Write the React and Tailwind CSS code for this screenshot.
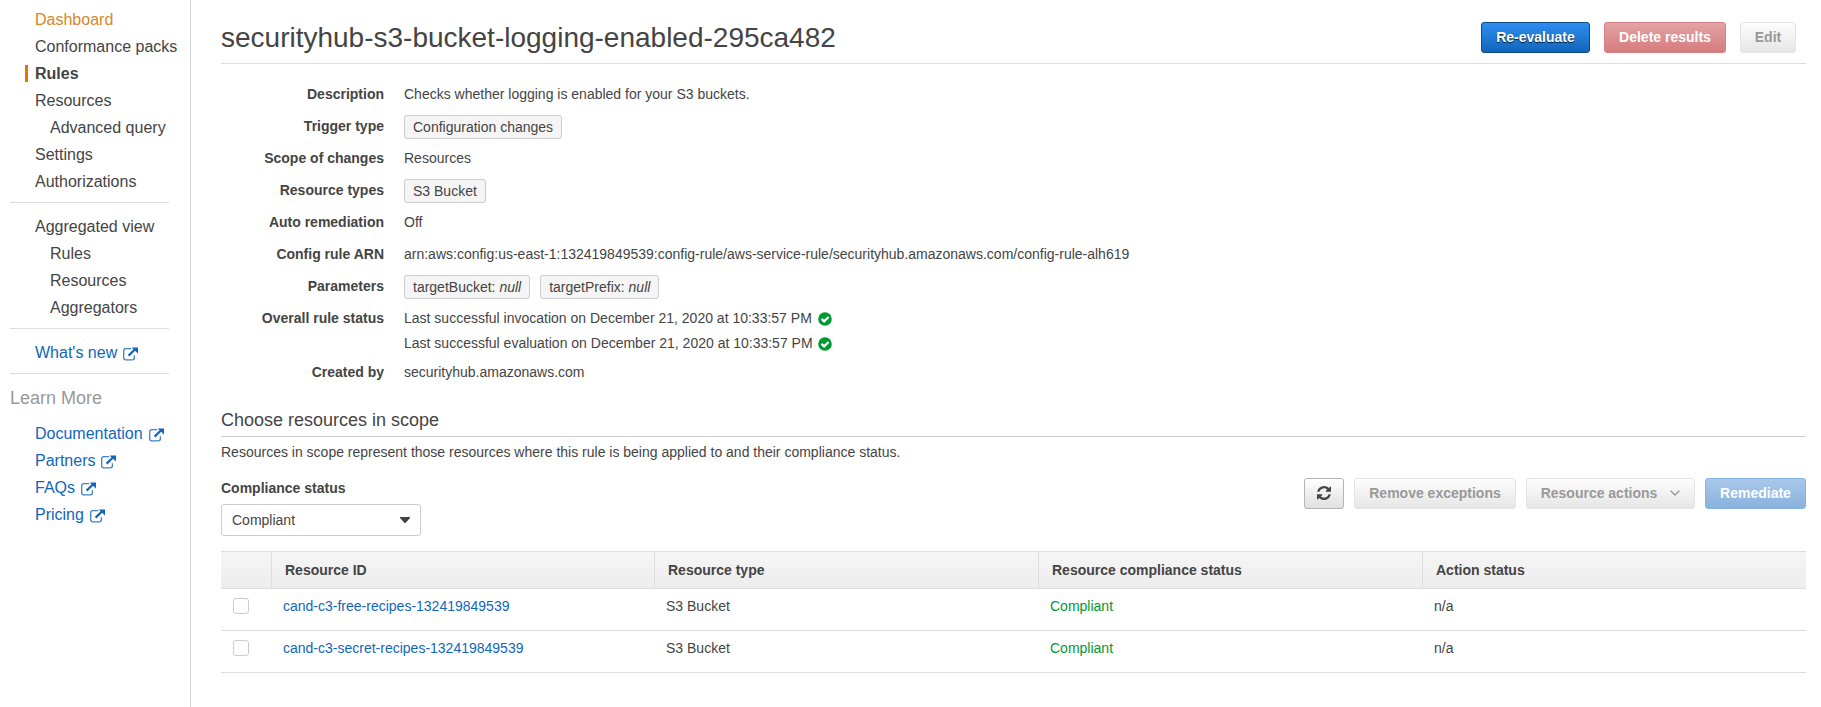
function ExternalIcon() {
  return (
    <svg className="ml-[6px] mt-[3px] shrink-0" width="16" height="14" viewBox="0 0 16 14" fill="none">
      <path d="M8 1.7H2.7A2 2 0 0 0 .7 3.7V10.8a2 2 0 0 0 2 2H9.4a2 2 0 0 0 2-2V8.2" stroke="#3f82c8" strokeWidth="1.3" />
      <path d="M5.6 8.6L12.4 2" stroke="#1166bb" strokeWidth="2.2" />
      <path d="M8.6 .4H15V6.6Z" fill="#1166bb" />
    </svg>
  );
}

function CheckIcon() {
  return (
    <svg className="mt-1 shrink-0" width="14" height="14" viewBox="0 0 14 14">
      <circle cx="7" cy="7" r="6.8" fill="#093" />
      <path d="M3.5 6.9L6.1 9.4L10.6 5" stroke="#fff" strokeWidth="2.2" fill="none" />
    </svg>
  );
}

function RefreshIcon() {
  return (
    <svg width="14" height="14" viewBox="0 0 1536 1536" fill="currentColor">
      <path d="M1511 928q0 5-1 7-64 268-268 434.5T764 1536q-146 0-282.5-55T238 1324l-129 129q-19 19-45 19t-45-19-19-45V960q0-26 19-45t45-19h448q26 0 45 19t19 45-19 45l-137 137q71 66 161 102t187 36q134 0 250-65t186-179q11-17 53-117 8-23 30-23h192q13 0 22.5 9.5t9.5 22.5zm25-800v448q0 26-19 45t-45 19h-448q-26 0-45-19t-19-45 19-45l138-138Q969 256 768 256q-134 0-250 65T332 500q-11 17-53 117-8 23-30 23H50q-13 0-22.5-9.5T18 608v-7q65-268 270-434.5T768 0q146 0 284 55.5T1297 212l130-129q19-19 45-19t45 19 19 45z" />
    </svg>
  );
}

function NavItem({ children, className = "pl-[25px]" }) {
  return <li className={`flex h-[27px] items-center whitespace-nowrap ${className}`}>{children}</li>;
}

function NavLink({ children }) {
  return (
    <NavItem className="pl-[25px] text-[#1166bb]">
      {children}
      <ExternalIcon />
    </NavItem>
  );
}

function Divider() {
  return <hr className="mb-[10px] mt-[7px] w-[159px] border-[#ddd]" />;
}

function Sidebar() {
  return (
    <nav className="h-full w-[191px] shrink-0 border-r border-[#d5d5d5] pl-[10px] pt-[6px] text-base">
      <ul>
        <NavItem className="pl-[25px] text-[#d6862b]">Dashboard</NavItem>
        <NavItem>Conformance packs</NavItem>
        <NavItem className="pl-[15px] font-bold">
          <span className="mr-[7px] h-[17px] w-[3px] bg-[#e07700]" />
          Rules
        </NavItem>
        <NavItem>Resources</NavItem>
        <NavItem className="pl-[40px]">Advanced query</NavItem>
        <NavItem>Settings</NavItem>
        <NavItem>Authorizations</NavItem>
      </ul>
      <Divider />
      <ul>
        <NavItem>Aggregated view</NavItem>
        <NavItem className="pl-[40px]">Rules</NavItem>
        <NavItem className="pl-[40px]">Resources</NavItem>
        <NavItem className="pl-[40px]">Aggregators</NavItem>
      </ul>
      <Divider />
      <ul>
        <NavLink>What's new</NavLink>
      </ul>
      <Divider />
      <h2 className="h-[27px] text-lg leading-[28px] text-[#999]">Learn More</h2>
      <ul className="pt-[9px]">
        <NavLink>Documentation</NavLink>
        <NavLink>Partners</NavLink>
        <NavLink>FAQs</NavLink>
        <NavLink>Pricing</NavLink>
      </ul>
    </nav>
  );
}

function Button({ children, className }) {
  return (
    <button className={`flex h-[31px] items-center justify-center whitespace-nowrap rounded-[3px] border bg-linear-to-b pb-px text-sm font-bold ${className}`}>
      {children}
    </button>
  );
}

const disabled = "border-[#e4e4e4] from-[#fdfdfd] to-[#e6e6e6] text-[#999]";

function Chip({ children }) {
  return (
    <span className="mr-[10px] flex h-6 items-center rounded-[3px] border border-[#ccc] bg-[#f5f5f5] px-2">{children}</span>
  );
}

function Detail({ label, children, className = "h-8" }) {
  return (
    <div className={`flex ${className}`}>
      <dt className="w-[163px] text-right font-bold leading-5">{label}</dt>
      <dd className="ml-5 leading-5">{children}</dd>
    </div>
  );
}

function Chips({ children }) {
  return <div className="-mt-px flex">{children}</div>;
}

function StatusLine({ children }) {
  return (
    <div className="flex h-[25px] items-start">
      <span className="w-[414px] whitespace-nowrap">{children}</span>
      <CheckIcon />
    </div>
  );
}

const rows = ["cand-c3-free-recipes-132419849539", "cand-c3-secret-recipes-132419849539"];
const columns = ["Resource ID", "Resource type", "Resource compliance status", "Action status"];

function Table() {
  return (
    <div className="mt-[15px] border-t border-[#ddd]">
      <div className="grid h-[37px] grid-cols-[50px_383px_384px_384px_384px] border-b border-[#ddd] bg-linear-to-b from-[#f5f5f5] to-[#ededed] font-bold">
        <div />
        {columns.map((c) => (
          <div key={c} className="flex items-center border-l border-[#ddd] pl-[13px]">{c}</div>
        ))}
      </div>
      {rows.map((id) => (
        <div key={id} className="grid h-[42px] grid-cols-[50px_383px_384px_384px_384px] border-b border-[#ddd] pt-[7px] leading-5">
          <div className="pl-3 pt-[2px]">
            <div className="size-4 rounded-[3px] border border-[#ccc] bg-white" />
          </div>
          <div className="pl-3 text-[#1166bb]">{id}</div>
          <div className="pl-3">S3 Bucket</div>
          <div className="pl-3 text-[#093]">Compliant</div>
          <div className="pl-3">n/a</div>
        </div>
      ))}
    </div>
  );
}

export default function App() {
  return (
    <div className="flex h-[707px] w-[1821px] overflow-hidden bg-white font-['Liberation_Sans',Arial,sans-serif] text-sm text-[#444]">
      <Sidebar />
      <main className="flex w-[1615px] flex-col pl-[30px]">
        <header className="flex h-16 items-start justify-between border-b border-[#ddd] pr-[10px] pt-[22px]">
          <h1 className="text-[28px] leading-8">securityhub-s3-bucket-logging-enabled-295ca482</h1>
          <div className="flex gap-[14px]">
            <Button className="w-[109px] border-[#0f4a8a] from-[#2e8df0] to-[#1166bb] text-white text-shadow-[0_1px_1px_#000000cc]">Re-evaluate</Button>
            <Button className="w-[122px] border-[#d98083] from-[#e2a3a4] to-[#d67b7e] text-white">Delete results</Button>
            <Button className={`w-14 ${disabled}`}>Edit</Button>
          </div>
        </header>

        <dl className="pt-5">
          <Detail label="Description">Checks whether logging is enabled for your S3 buckets.</Detail>
          <Detail label="Trigger type"><Chips><Chip>Configuration changes</Chip></Chips></Detail>
          <Detail label="Scope of changes">Resources</Detail>
          <Detail label="Resource types"><Chips><Chip>S3 Bucket</Chip></Chips></Detail>
          <Detail label="Auto remediation">Off</Detail>
          <Detail label="Config rule ARN">
            arn:aws:config:us-east-1:132419849539:config-rule/aws-service-rule/securityhub.amazonaws.com/config-rule-alh619
          </Detail>
          <Detail label="Parameters">
            <Chips>
              <Chip>targetBucket:&nbsp;<i>null</i></Chip>
              <Chip>targetPrefix:&nbsp;<i>null</i></Chip>
            </Chips>
          </Detail>
          <Detail label="Overall rule status" className="h-[54px]">
            <StatusLine>Last successful invocation on December 21, 2020 at 10:33:57 PM</StatusLine>
            <StatusLine>Last successful evaluation on December 21, 2020 at 10:33:57 PM</StatusLine>
          </Detail>
          <Detail label="Created by" className="h-[38px]">securityhub.amazonaws.com</Detail>
        </dl>

        <h2 className="h-[37px] border-b border-[#ccc] pt-[8px] text-lg leading-6">Choose resources in scope</h2>
        <p className="pt-[5px] leading-5">Resources in scope represent those resources where this rule is being applied to and their compliance status.</p>

        <div className="flex items-start justify-between pt-4">
          <div>
            <div className="font-bold leading-5">Compliance status</div>
            <div className="mt-[6px] flex h-8 w-[200px] items-center justify-between rounded-[3px] border border-[#ccc] px-[10px]">
              Compliant
              <svg width="10" height="6" viewBox="0 0 10 6"><path d="M0 0H10V1L5.5 6H4.5L0 1Z" fill="#444" /></svg>
            </div>
          </div>
          <div className="flex gap-[10px]">
            <Button className="w-10 border-[#b5b5b5] from-white to-[#e0e0e0]"><RefreshIcon /></Button>
            <Button className={`w-[162px] ${disabled}`}>Remove exceptions</Button>
            <Button className={`w-[169px] ${disabled}`}>
              Resource actions
              <svg className="ml-[13px]" width="10" height="6" viewBox="0 0 10 6" fill="none"><path d="M.7.7L5 5L9.3.7" stroke="#999" strokeWidth="1.4" /></svg>
            </Button>
            <Button className="w-[101px] border-[#86b4e0] from-[#a9c8ea] to-[#88b2dd] text-white">Remediate</Button>
          </div>
        </div>
        <Table />
      </main>
    </div>
  );
}
